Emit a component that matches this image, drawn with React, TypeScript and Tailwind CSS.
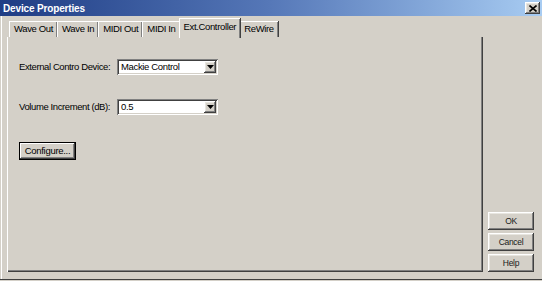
const TABS = ['Wave Out', 'Wave In', 'MIDI Out', 'MIDI In', 'Ext.Controller', 'ReWire']
const ACTIVE = 'Ext.Controller'

const raised =
  'shadow-[inset_-1px_-1px_#404040,inset_1px_1px_#ffffff,inset_-2px_-2px_#808080,inset_2px_2px_#e8e6e0]'

function Tab({ label, active }: { label: string; active: boolean }) {
  return (
    <div
      className={
        active
          ? 'relative z-10 -mx-[1px] -mb-[1px] flex h-[20px] items-center border-l border-t border-white px-[4px] pb-[2px] shadow-[inset_-1px_0_#808080,1px_0_#404040] bg-[#d4d0c8]'
          : 'flex h-[16px] items-center border-l border-t border-white px-[4px] shadow-[inset_-1px_0_#808080,1px_0_#404040]'
      }
    >
      <span className="whitespace-nowrap text-[9.5px] tracking-[-0.35px] text-black">{label}</span>
    </div>
  )
}

function Dropdown({ value }: { value: string }) {
  return (
    <div className="flex h-[16px] w-[101px] items-stretch bg-white shadow-[inset_1px_1px_#808080,inset_-1px_-1px_#ffffff,inset_2px_2px_#404040,inset_-2px_-2px_#d4d0c8] p-[2px]">
      <span className="flex-1 pl-[2px] text-[9.5px] leading-[12px] tracking-[-0.35px] text-black">{value}</span>
      <span className={`flex w-[12px] items-center justify-center bg-[#d4d0c8] ${raised}`}>
        <svg width="7" height="4" viewBox="0 0 7 4">
          <path d="M0 0h7L3.5 4z" fill="#000" />
        </svg>
      </span>
    </div>
  )
}

function DialogButton({ label }: { label: string }) {
  return (
    <button className={`flex h-[18px] w-[46px] items-center justify-center bg-[#d4d0c8] ${raised}`}>
      <span className="text-[8.5px] tracking-[-0.3px] text-[#1a1a1a]">{label}</span>
    </button>
  )
}

export default function App() {
  return (
    <div className="flex h-[281px] w-[542px] flex-col overflow-hidden bg-[#d4d0c8] font-['Liberation_Sans',Arial,sans-serif]">
      {/* title bar */}
      <div className="flex h-[16px] items-center justify-between bg-gradient-to-r from-[#1f3c84] via-[#5678b8] to-[#a8ccf2] pl-[3px] pr-[2px]">
        <span className="text-[10px] font-bold tracking-[-0.15px] text-white">Device Properties</span>
        <span className={`flex h-[12px] w-[15px] items-center justify-center bg-[#d4d0c8] ${raised}`}>
          <svg width="8" height="7" viewBox="0 0 8 7">
            <path d="M0.5 0.5L7.5 6.5M7.5 0.5L0.5 6.5" stroke="#000" strokeWidth="1.6" />
          </svg>
        </span>
      </div>

      <div className="ml-[1px] flex flex-1 border-l border-white pl-[5px] pb-[7px]">
        <div className="flex flex-col">
          {/* tabs */}
          <div className="flex h-[21px] items-end pl-[2px]">
            {TABS.map((t) => (
              <Tab key={t} label={t} active={t === ACTIVE} />
            ))}
          </div>

          {/* tab panel */}
          <div className="flex h-[235px] w-[476px] flex-col border-l border-white pl-[11px] pt-[22px] shadow-[inset_-1px_-1px_#404040,inset_-2px_-2px_#808080]">
            <div className="flex items-center">
              <span className="w-[98px] whitespace-nowrap text-[9.5px] tracking-[-0.4px] text-black">External Contro Device:</span>
              <Dropdown value="Mackie Control" />
            </div>
            <div className="mt-[24px] flex items-center">
              <span className="w-[98px] whitespace-nowrap text-[9.5px] tracking-[-0.4px] text-black">Volume Increment (dB):</span>
              <Dropdown value="0.5" />
            </div>
            <div className="mt-[27px]">
              <button className="flex h-[18px] w-[57px] items-center justify-center border border-black bg-[#d4d0c8] shadow-[inset_-1px_-1px_#404040,inset_1px_1px_#ffffff,inset_-2px_-2px_#808080]">
                <span className="text-[9.5px] tracking-[-0.3px] text-black">Configure...</span>
              </button>
            </div>
          </div>
        </div>

        {/* dialog buttons */}
        <div className="ml-[5px] flex flex-col justify-end gap-[3px]">
          <DialogButton label="OK" />
          <DialogButton label="Cancel" />
          <DialogButton label="Help" />
        </div>
      </div>
      <div className="h-[1px] bg-[#404040]" />
      <div className="h-[1px]" />
    </div>
  )
}
